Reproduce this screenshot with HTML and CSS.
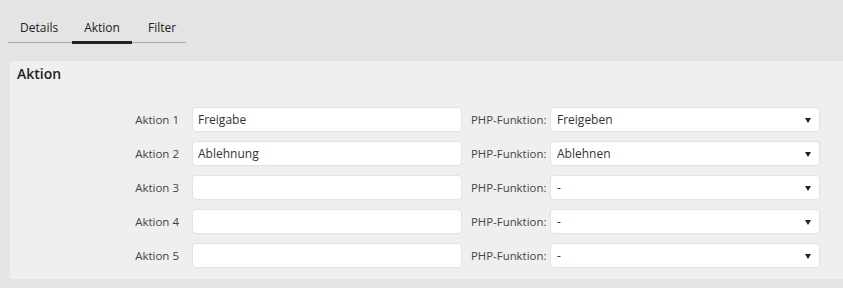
FILE: index.html
```html
<!DOCTYPE html>
<html lang="de">
<head>
  <meta charset="UTF-8">
  <title>Aktion</title>
  <link rel="stylesheet" href="styles.css">
</head>
<body>
  <div class="tabs">
    <div class="tab">Details</div>
    <div class="tab active">Aktion</div>
    <div class="tab">Filter</div>
  </div>

  <!-- Aktion panel -->
  <div class="panel">
    <h2 class="panel-title">Aktion</h2>
    <div class="rows">
      <div class="row">
        <label class="row-label">Aktion 1</label>
        <input class="field" type="text" value="Freigabe">
        <span class="php-label">PHP-Funktion:</span>
        <span class="select-wrap">
          <select class="field select">
            <option>Freigeben</option>
          </select>
        </span>
      </div>
      <div class="row">
        <label class="row-label">Aktion 2</label>
        <input class="field" type="text" value="Ablehnung">
        <span class="php-label">PHP-Funktion:</span>
        <span class="select-wrap">
          <select class="field select">
            <option>Ablehnen</option>
          </select>
        </span>
      </div>
      <div class="row">
        <label class="row-label">Aktion 3</label>
        <input class="field" type="text" value="">
        <span class="php-label">PHP-Funktion:</span>
        <span class="select-wrap">
          <select class="field select">
            <option>-</option>
          </select>
        </span>
      </div>
      <div class="row">
        <label class="row-label">Aktion 4</label>
        <input class="field" type="text" value="">
        <span class="php-label">PHP-Funktion:</span>
        <span class="select-wrap">
          <select class="field select">
            <option>-</option>
          </select>
        </span>
      </div>
      <div class="row">
        <label class="row-label">Aktion 5</label>
        <input class="field" type="text" value="">
        <span class="php-label">PHP-Funktion:</span>
        <span class="select-wrap">
          <select class="field select">
            <option>-</option>
          </select>
        </span>
      </div>
    </div>
  </div>
</body>
</html>
```

FILE: styles.css
```css
body {
  font-family: 'Open Sans', sans-serif;
  font-size: 12px;
  color: #333;
  background: #e4e4e4;
  margin: 0;
  padding: 0;
  height: 288px;
  overflow: hidden;
}
.tabs {
  display: flex;
  margin: 14px 0 0 8px;
  width: 178px;
  border-bottom: 1px solid #a8a8a8;
}
.tab {
  padding: 3px 12px 0 12px;
  height: 28px;
  line-height: 22px;
  color: #222;
  margin-right: 2px;
  box-sizing: border-box;
}
.tab:last-child {
  padding-left: 14px;
}
.tab.active {
  border-bottom: 3px solid #222;
  margin-bottom: -2px;
  height: 30px;
}
.panel {
  background: #efefef;
  margin: 18px 0 0 10px;
  border-radius: 3px 0 0 3px;
  height: 218px;
  box-sizing: border-box;
  padding-top: 3px;
}
.panel-title {
  font-size: 14px;
  font-weight: 600;
  margin: 0 0 0 7px;
  line-height: 20px;
  color: #222;
}
.rows {
  display: flex;
  flex-direction: column;
  gap: 11px;
  margin-top: 24px;
}
.row {
  display: flex;
  align-items: center;
}
.row-label {
  width: 169px;
  flex-shrink: 0;
  text-align: right;
  margin-right: 14px;
  font-size: 11.5px;
  color: #444;
}
.field {
  width: 268px;
  height: 23px;
  flex-shrink: 0;
  box-sizing: border-box;
  border: none;
  border-radius: 3px;
  background: #fff;
  box-shadow: 0 0 2px rgba(0, 0, 0, 0.18);
  font-family: 'Open Sans', sans-serif;
  font-size: 12px;
  color: #333;
  padding: 0 5px;
  outline: none;
}
.php-label {
  width: 76px;
  margin-left: 10px;
  margin-right: 4px;
  white-space: nowrap;
  flex-shrink: 0;
  font-size: 11.4px;
  color: #444;
}
.select-wrap {
  position: relative;
  display: inline-block;
  flex-shrink: 0;
}
.select {
  appearance: none;
  -webkit-appearance: none;
  padding: 0 6px;
  display: block;
}
.select-wrap::after {
  content: "";
  position: absolute;
  right: 8px;
  top: 10px;
  border-left: 3px solid transparent;
  border-right: 3px solid transparent;
  border-top: 5px solid #222;
  pointer-events: none;
}
```
